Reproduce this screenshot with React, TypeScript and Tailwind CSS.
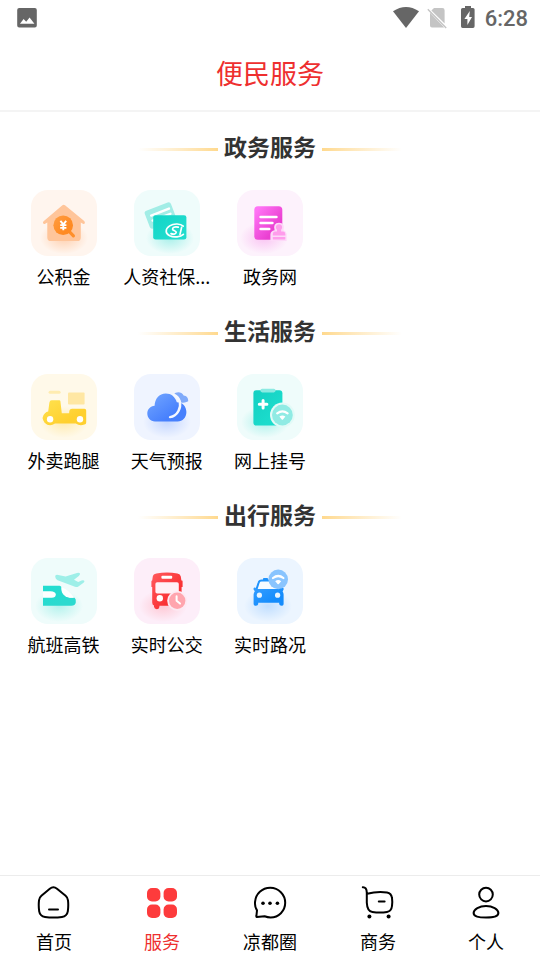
import type { ReactNode } from "react";

type Service = {
  name: string;
  icon: ReactNode;
};

type Section = {
  title: string;
  items: Service[];
};

const Wifi = ({ x, y }: { x: number; y: number }) => (
  <g transform={`translate(${x} ${y})`}>
    <path d="M-5.2 -1.6Q0 -5.6 5.2 -1.6" fill="none" stroke="#fff" strokeWidth="2.2" strokeLinecap="round" />
    <path d="M-3 1.6Q0 -0.7 3 1.6L0.6 4.4Q0 5 -0.6 4.4Z" fill="#fff" />
  </g>
);

type TileProps = {
  id: string;
  bg: string;
  from: string;
  to: string;
  glow: string;
  glowX?: number;
  children: ReactNode;
};

// rounded tile with a soft glow under the drawing; the fill gradient is url(#id)
const Tile = ({ id, bg, from, to, glow, glowX = 33, children }: TileProps) => (
  <svg viewBox="0 0 66 66" className="h-[66px] w-[66px]" aria-hidden="true">
    <defs>
      <linearGradient id={id} x1="0" y1="0" x2="1" y2="1">
        <stop offset="0.1" stopColor={from} />
        <stop offset="0.7" stopColor={to} />
      </linearGradient>
      <radialGradient id={`${id}-glow`}>
        <stop offset="0" stopColor={glow} stopOpacity="0.6" />
        <stop offset="0.5" stopColor={glow} stopOpacity="0.3" />
        <stop offset="1" stopColor={glow} stopOpacity="0" />
      </radialGradient>
    </defs>
    <rect width="66" height="66" rx="17" fill={bg} />
    <ellipse cx={glowX} cy="48" rx="24" ry="16" fill={`url(#${id}-glow)`} />
    {children}
  </svg>
);

const FundIcon = () => (
  <Tile id="fund" bg="#fff5ee" from="#ff9a3d" to="#ff8a22" glow="#ffb988">
    <path
      d="M31.4 15.2Q32.7 14.2 34 15.2L53.2 31Q54.4 32.2 53.6 33.4Q52.8 34.4 51.4 33.6L49.8 32.6V47.4Q49.8 51 46.2 51H20Q16.3 51 16.3 47.4V32.6L14.2 33.8Q12.8 34.4 12.1 33.3Q11.5 32.2 12.6 31.2Z"
      fill="#ffc59a"
    />
    <path d="M38.6 41.8L42.4 45.8" stroke="#ff8f2b" strokeWidth="3.2" strokeLinecap="round" />
    <circle cx="32.2" cy="35.2" r="9.8" fill="url(#fund)" />
    <path
      d="M29.4 30.8L32.3 34.4L35.2 30.8M32.3 34.4V40.2M29.2 35.1H35.4M29.2 37.9H35.4"
      fill="none"
      stroke="#fff"
      strokeWidth="1.9"
    />
  </Tile>
);

const SocialIcon = () => (
  <Tile id="social" bg="#effcfb" from="#14d6c8" to="#20dccd" glow="#7be8df" glowX={36}>
    <rect x="12.4" y="16" width="28" height="19" rx="2.6" fill="#a2ede6" transform="rotate(-21 26.4 25.5)" />
    <path d="M17.2 25.6L35 18.6M18.6 30.6L36.4 23.8" stroke="#fff" strokeWidth="2.4" strokeLinecap="round" />
    <rect x="19.2" y="25.2" width="33.2" height="24.4" rx="2.4" fill="url(#social)" />
    <path
      d="M49.2 36.2C46.6 33.6 40 33.1 35.7 35.9C31 39 31.1 43.5 35.7 45.8C40 47.8 46.6 46.9 49.4 44.4"
      fill="none"
      stroke="#fff"
      strokeWidth="1.7"
      strokeLinecap="round"
    />
    <path
      d="M44.2 37.2C40.8 36.4 38.2 37.4 38.6 39.3C39 41 42.6 40.5 42.2 42.4C41.8 44.3 39 44.5 37 43.6"
      fill="none"
      stroke="#fff"
      strokeWidth="1.7"
      strokeLinecap="round"
    />
    <path d="M47.6 37.4L46 44.4" stroke="#fff" strokeWidth="1.7" strokeLinecap="round" />
  </Tile>
);

const GovIcon = () => (
  <Tile id="gov" bg="#fdf2fc" from="#ff74f5" to="#ea3fd1" glow="#f7a6ec" glowX={27}>
    <rect x="17.3" y="16.2" width="28" height="33.6" rx="3.6" fill="url(#gov)" />
    <path
      d="M23.6 27H39.4M23.6 33H35.4M23.6 39H32.2"
      stroke="#fff"
      strokeWidth="2.6"
      strokeLinecap="round"
    />
    <path
      d="M33.4 51V44.2Q33.6 41 37.6 40.2Q35.6 33 42 32.8Q48.4 33 46.4 40.2Q49 40.8 49.6 43.8V51Z"
      fill="#fdd9f8"
    />
    <path
      d="M42 34.2Q45.2 34.4 45.1 37.4Q45 38.8 44.1 39.7V41.6H46.2Q48.3 41.8 48.3 44V45.4H35.8V44Q35.8 41.8 37.9 41.6H40V39.7Q39 38.8 38.9 37.4Q38.8 34.4 42 34.2Z"
      fill="#ff9cec"
    />
    <rect x="35.8" y="47" width="12.5" height="2.4" rx="0.6" fill="#ff9cec" />
  </Tile>
);

const DeliveryIcon = () => (
  <Tile id="delivery" bg="#fff9e9" from="#ffdf4a" to="#ffd02f" glow="#ffe28a">
    <rect x="17.6" y="16.8" width="12" height="3" rx="1.5" fill="#ffecb0" />
    <rect x="37" y="18.4" width="16.6" height="12" rx="1" fill="#ffe7a3" />
    <path
      d="M20.6 26.2H28.4Q29.2 26.2 29.4 27.2L30.8 39.2H38.2V38Q38.4 34.8 41.2 34.8H53.4Q55.2 34.8 55.2 36.6V48.4Q55.2 50.2 53.4 50.4Q49 52.4 44.8 49.6H24Q18.4 53.4 13.6 48.8Q9.6 43 14 39.2Q15.4 37.9 17.2 37.6L18.4 28.4Q18.8 26.2 20.6 26.2Z"
      fill="url(#delivery)"
    />
    <circle cx="19.1" cy="45.2" r="3.2" fill="#fff" />
    <circle cx="49" cy="45.2" r="3.2" fill="#fff" />
  </Tile>
);

const WeatherIcon = () => (
  <Tile id="weather" bg="#eff4ff" from="#6ea2ff" to="#4780fd" glow="#a8c3ff">
    <path
      d="M39.8 20.4C41.5 17.6 47.6 17 49.6 21.6C52.6 21.8 54.4 24.2 54.2 27.2C52 28.6 49.4 28.6 47.4 28.8C46.4 25.2 43.6 21.8 39.8 20.4Z"
      fill="#80aafa"
    />
    <path
      d="M21 47.4C16.4 47.4 13.3 43.8 13.3 39.6C13.3 35.4 16.4 32 20.6 31.8C20.8 24.6 25.2 19.4 31.8 19.4C37.2 19.4 41.2 22.8 42.8 28.2C48.6 28.2 52.4 32.4 52.4 38C52.4 43.6 48.6 47.4 43.6 47.4Z"
      fill="url(#weather)"
    />
    <path
      d="M39.8 20.6C46.6 23.8 47.6 31.6 44.4 37.2C42.4 40.8 39.4 42.8 36 43.1"
      fill="none"
      stroke="#f5f8ff"
      strokeWidth="2.4"
      strokeLinecap="round"
    />
  </Tile>
);

const HospitalIcon = () => (
  <Tile id="hospital" bg="#effcfb" from="#15d1c3" to="#1bdccc" glow="#84ebe2" glowX={28}>
    <rect x="16.4" y="16.2" width="29" height="35.4" rx="3" fill="url(#hospital)" />
    <rect x="23.4" y="14.8" width="15.2" height="3.6" rx="1.8" fill="#8ceae2" />
    <path d="M26.1 26.4V34M22.3 30.2H29.9" stroke="#fff" strokeWidth="3" strokeLinecap="round" />
    <circle cx="45.4" cy="41" r="12.4" fill="#e2faf7" />
    <circle cx="45.4" cy="41" r="10.4" fill="#90ebe4" />
    <Wifi x={45.4} y={41} />
  </Tile>
);

const TravelIcon = () => (
  <Tile id="travel" bg="#effcfb" from="#22ddd0" to="#2bdacf" glow="#8eece4" glowX={28}>
    <path
      d="M24.2 18.8Q24 17 26 16.8L34.6 18.4L46 14.9Q48.4 14.4 49 15.6Q49.4 16.6 47.8 18L43 21.8L47.2 24L50.6 22.4Q53 21.8 53.4 23Q53.6 23.8 52.2 25L47 28.8Q45.8 29.4 44 28.8L26.6 22.2Q24.4 21 24.2 18.8Z"
      fill="#9eefe8"
    />
    <path
      d="M12 27.8H28.6Q30.6 28 30.6 30.4Q31 37.6 39 39.8H43.6Q45.2 41.2 44.8 44.4Q44 47.6 40.4 47.8H12Z"
      fill="url(#travel)"
    />
    <path d="M12 33.2H19.4Q24.6 33.4 24.8 36.4Q24.6 39.6 20.8 39.8H12Z" fill="#fff" />
    <path d="M30.6 29.2Q38.4 32.4 42.8 39.4Q40.4 40.2 36.6 39.2Q31.6 37.6 30.6 33Q30.2 31 30.6 29.2Z" fill="#fff" />
  </Tile>
);

const BusIcon = () => (
  <Tile id="bus" bg="#fdeef9" from="#ff5457" to="#f92f32" glow="#ffb0bd" glowX={29}>
    <path
      d="M22.4 15.4Q33 13.6 43.4 15.4Q46.4 16 46.8 18.6L47.4 22.6H48Q48.6 22.8 48.6 23.6V29H47.6V44.4Q47.4 47.6 44.4 47.8H25.4V49Q25 51.2 22.8 51.2Q20.4 51 20 48.8V47.4Q18.2 46.8 18.2 44.4V29H17.4V23.6Q17.4 22.8 18.2 22.6L18.8 18.6Q19.2 16 22.4 15.4Z"
      fill="url(#bus)"
    />
    <rect x="27.4" y="17.8" width="10.8" height="3" rx="1" fill="#fff" />
    <rect x="21.4" y="24.2" width="23.4" height="11.4" rx="1.8" fill="#fff1f6" />
    <circle cx="25.8" cy="40.2" r="3.2" fill="#fff" />
    <circle cx="43.2" cy="42.8" r="10" fill="#fdeaf3" />
    <circle cx="43.2" cy="42.8" r="8.2" fill="#ffa5ae" />
    <path
      d="M42.6 38.2V42.8L46 45.6"
      fill="none"
      stroke="#fff"
      strokeWidth="2"
      strokeLinecap="round"
      strokeLinejoin="round"
    />
  </Tile>
);

const TrafficIcon = () => (
  <Tile id="traffic" bg="#ecf5ff" from="#2f9bff" to="#158cfc" glow="#a5d0ff" glowX={31}>
    <path
      d="M19.4 31.6L21.6 24.8Q22.2 22.6 24.6 22.6H40L43.6 31.6"
      fill="#f7fbff"
      stroke="#1f93fd"
      strokeWidth="2"
    />
    <rect x="26" y="20" width="5" height="3" rx="0.8" fill="#1f93fd" />
    <path
      d="M19.4 31H43.8Q44.6 29.4 46 29.6Q46.8 30 46.6 31.6L45.6 33.4Q46.6 34.8 46.6 36.6V46.2Q46.4 47.8 44.6 47.8Q42.4 47.8 42.2 46V44.8H21.2V46Q21 47.8 19 47.8Q16.8 47.8 16.6 46.2V36.6Q16.6 34.8 17.8 33.2L16.6 31.6Q16.2 30 17.4 29.6Q18.6 29.4 19.4 31Z"
      fill="url(#traffic)"
    />
    <circle cx="22.4" cy="37.2" r="2.6" fill="#e9f5ff" />
    <circle cx="40.6" cy="37.2" r="2.6" fill="#e9f5ff" />
    <circle cx="41.2" cy="21.4" r="9.8" fill="#89c4fe" />
    <Wifi x={41.2} y={21.6} />
  </Tile>
);

const sections: Section[] = [
  {
    title: "政务服务",
    items: [
      { name: "公积金", icon: <FundIcon /> },
      { name: "人资社保...", icon: <SocialIcon /> },
      { name: "政务网", icon: <GovIcon /> },
    ],
  },
  {
    title: "生活服务",
    items: [
      { name: "外卖跑腿", icon: <DeliveryIcon /> },
      { name: "天气预报", icon: <WeatherIcon /> },
      { name: "网上挂号", icon: <HospitalIcon /> },
    ],
  },
  {
    title: "出行服务",
    items: [
      { name: "航班高铁", icon: <TravelIcon /> },
      { name: "实时公交", icon: <BusIcon /> },
      { name: "实时路况", icon: <TrafficIcon /> },
    ],
  },
];

const tabs = [
  {
    name: "首页",
    icon: (
      <>
        <path d="M13.8 3.8Q17.4 0.8 21 3.8L29.6 10.8Q31.7 12.6 32 15.4Q32.6 21 31.8 26.4Q31 31.2 26 31.9Q17.4 33 9 31.9Q4 31.2 3.2 26.4Q2.4 21 3 15.4Q3.3 12.6 5.4 10.8Z" />
        <path d="M13 24.4H22" />
      </>
    ),
  },
  {
    name: "服务",
    active: true,
    icon: (
      <g fill="#fd3b3c" stroke="none">
        <rect x="3" y="3" width="13.4" height="13.4" rx="5" />
        <rect x="19.6" y="3" width="13.4" height="13.4" rx="5" />
        <rect x="3" y="19.6" width="13.4" height="13.4" rx="5" />
        <rect x="19.6" y="19.6" width="13.4" height="13.4" rx="5" />
      </g>
    ),
  },
  {
    name: "凉都圈",
    icon: (
      <>
        <path d="M4.8 32.1Q4.2 32 4.4 31L5 25.4Q2.6 21.6 3 17.2C3.6 8.8 10.2 2.8 18.2 2.8C26.6 2.8 33.2 9.6 33.2 17.8C33.2 26 26.6 32.4 18.6 32.4Q15.6 32.4 12.6 31.2Z" />
        <g fill="currentColor" stroke="none">
          <circle cx="11" cy="18.2" r="1.8" />
          <circle cx="18" cy="18.2" r="1.8" />
          <circle cx="25.4" cy="18.2" r="1.8" />
        </g>
      </>
    ),
  },
  {
    name: "商务",
    icon: (
      <>
        <path d="M2.8 2.2Q6.6 2 6.8 7.6V17.6Q7.2 26.2 12.4 27Q20 28.2 27 27Q31.4 26.2 32 21Q32.6 17 32 13Q31.4 8.2 27 7.4Q17 6 7.2 8.8" />
        <path d="M18.8 16.4H24.6" />
        <g fill="currentColor" stroke="none">
          <circle cx="9.4" cy="31.4" r="2" />
          <circle cx="28.6" cy="31.6" r="2" />
        </g>
      </>
    ),
  },
  {
    name: "个人",
    icon: (
      <>
        <circle cx="18" cy="9.6" r="6.8" />
        <path d="M18 21C24.6 21 30.4 24.2 30.4 28C30.4 31.6 25.4 32.6 18 32.6C10.6 32.6 5.6 31.6 5.6 28C5.6 24.2 11.4 21 18 21Z" />
      </>
    ),
  },
];

const StatusBar = () => (
  <div className="flex h-9 items-center justify-between pr-3 pl-4 text-[#666]">
    <svg viewBox="0 0 22 22" className="h-[22px] w-[22px]" fill="currentColor" aria-hidden="true">
      <path
        fillRule="evenodd"
        d="M3.2 1H18.8Q20.8 1 20.8 3V18.6Q20.8 20.6 18.8 20.6H3.2Q1.2 20.6 1.2 18.6V3Q1.2 1 3.2 1ZM4 16.8H18.4L13.6 10.4L10.2 14.8L7.6 12Z"
      />
    </svg>
    <div className="flex items-center gap-2">
      <svg viewBox="0 0 84 24" className="h-6 w-[84px]" fill="currentColor" aria-hidden="true">
        <path d="M13 22L0 5.2Q13 -3.4 26 5.2Z" />
        <path d="M41 2H49.4Q51.6 2 51.6 4.2V17.4L38.4 4.6ZM37 6.8L51.2 21.6H39Q37 21.6 37 19.6Z" fill="#c4c4c4" />
        <path d="M34.8 3.2L53.2 22" stroke="#c4c4c4" strokeWidth="1.4" />
        <path
          fillRule="evenodd"
          d="M72 0H78V2H80Q81.6 2 81.6 3.6V20.2Q81.6 22 80 22H69.6Q68 22 68 20.2V3.6Q68 2 69.6 2H72ZM76.8 5L71.4 13H74.4V19L79 11H76.2Z"
        />
      </svg>
      <span className="pt-0.5 font-[Roboto,sans-serif] text-[22px] leading-6 font-medium">6:28</span>
    </div>
  </div>
);

const ServiceSection = ({ title, items }: Section) => (
  <section className="pb-2">
    <div className="flex h-[74px] items-center justify-center gap-1.5">
      <span className="h-[3px] w-20 bg-linear-to-l from-[#ffd98e] to-white" />
      <h2 className="pb-1.5 text-[23px] leading-8 font-bold text-[#333]">{title}</h2>
      <span className="h-[3px] w-20 bg-linear-to-r from-[#ffd98e] to-white" />
    </div>
    <div className="grid grid-cols-5 pt-1">
      {items.map((item) => (
        <a key={item.name} href="#" className="flex flex-col items-center gap-2">
          {item.icon}
          <span className="text-lg leading-6 whitespace-nowrap text-black">{item.name}</span>
        </a>
      ))}
    </div>
  </section>
);

export default function App() {
  return (
    <div className="flex min-h-screen flex-col bg-white font-['Noto_Sans_CJK_SC',sans-serif]">
      <StatusBar />

      <header className="flex h-[76px] items-center justify-center border-b-2 border-[#f4f4f4]">
        <h1 className="text-[27px] leading-9 text-[#ee2f2f]">便民服务</h1>
      </header>

      <main className="flex-1 px-3">
        {sections.map((section) => (
          <ServiceSection key={section.title} {...section} />
        ))}
      </main>

      <nav className="sticky bottom-0 grid h-[85px] grid-cols-5 border-t border-[#ececec] bg-white pt-[9px]">
        {tabs.map((tab) => (
          <a
            key={tab.name}
            href="#"
            className={`flex flex-col items-center gap-2 ${tab.active ? "text-[#ee2f2f]" : "text-black"}`}
          >
            <svg
              viewBox="0 0 36 36"
              className="h-9 w-9"
              fill="none"
              stroke="currentColor"
              strokeWidth="2"
              strokeLinecap="round"
              strokeLinejoin="round"
              aria-hidden="true"
            >
              {tab.icon}
            </svg>
            <span className="text-lg leading-6">{tab.name}</span>
          </a>
        ))}
      </nav>
    </div>
  );
}
